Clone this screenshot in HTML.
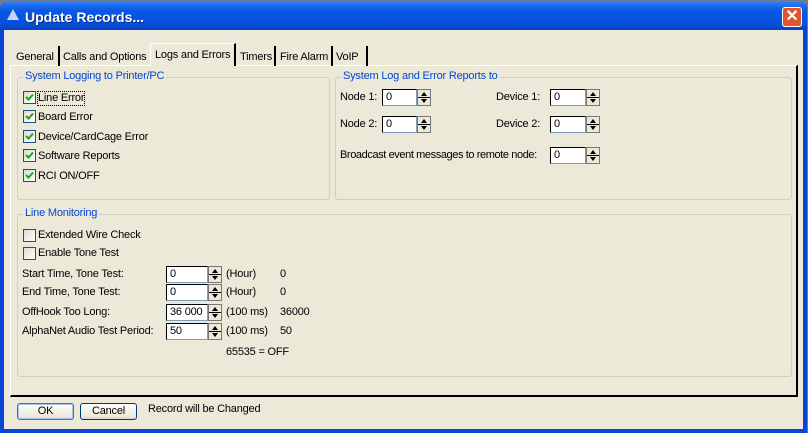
<!DOCTYPE html>
<html><head><style>
*{box-sizing:border-box;margin:0;padding:0}
body{width:808px;height:433px;overflow:hidden;background:#6d7a8f;font-family:"Liberation Sans",sans-serif;font-size:11px;letter-spacing:-0.2px;color:#000;position:relative}
.a{position:absolute}
.win{left:0;top:2px;width:807px;height:431px;background:#0a45d8;border-radius:7px 7px 0 0}
.title{left:0;top:2px;width:807px;height:28px;background:linear-gradient(#2b7cf6,#0a58e6 30%,#0550da 80%,#0a3fc0);border-radius:7px 7px 0 0}
.body{left:4px;top:30px;width:799px;height:399px;background:#ece9d8}
.t{white-space:nowrap;line-height:13px}
.grp{border:1px solid #d0d0bf;border-radius:3px}
.leg{background:#ece9d8;color:#0046d5;padding:0 2px}
.cb{width:13px;height:13px;border:1px solid #1c5180;background:linear-gradient(135deg,#dcdcd5,#fff)}
.cb svg{position:absolute;left:1px;top:1px}
.in{height:17px;border:1px solid #7f9db9;border-top-color:#000;border-left-color:#000;background:#fff;padding-left:3px;line-height:15px}
.sp{width:14px;height:17px;background:#ece9d8;border:1px solid #777;}
.sp:before{content:"";position:absolute;left:3px;top:2px;border:3px solid transparent;border-bottom:4px solid #000;border-top:0}
.sp:after{content:"";position:absolute;left:3px;bottom:2px;border:3px solid transparent;border-top:4px solid #000;border-bottom:0}
.sp i{position:absolute;left:0;top:7px;width:12px;height:1px;background:#000}
.sep{top:46px;width:2px;height:20px;background:#000}
.btn{height:17px;border:1px solid #003c74;border-radius:3px;background:linear-gradient(#fff,#ece9d8 85%,#d6d0c5);text-align:center;line-height:15px}
</style></head><body>
<div class="a win"></div>
<div class="a title"></div>
<div class="a" style="left:7px;top:9px;width:0;height:0;border-left:6px solid transparent;border-right:6px solid transparent;border-bottom:11px solid #c8d4ff"></div>
<div class="a t" style="left:25px;top:9px;color:#fff;font-weight:bold;font-size:14px;line-height:16px;letter-spacing:0;text-shadow:1px 1px #0a2a80">Update Records...</div>
<div class="a" style="left:782px;top:7px;width:20px;height:20px;border:1px solid #fff;border-radius:3px;background:#e0542e;color:#fff;text-align:center;font-size:16px;line-height:18px;font-weight:bold">✕</div>
<div class="a body"></div>
<!-- tab panel -->
<div class="a" style="left:10px;top:65px;width:788px;height:332px;border:1px solid #fff;border-right:2px solid #000;border-bottom:2px solid #000;background:#ece9d8"></div>
<div class="a t" style="left:16px;top:51px">General</div><div class="a sep" style="left:58px"></div>
<div class="a t" style="left:63px;top:51px">Calls and Options</div>
<div class="a" style="left:150px;top:43px;width:86px;height:23px;background:#ece9d8;border:1px solid #fff;border-bottom:none;border-right:2px solid #000"></div>
<div class="a t" style="left:155px;top:49px">Logs and Errors</div>
<div class="a t" style="left:240px;top:51px">Timers</div><div class="a sep" style="left:274px"></div>
<div class="a t" style="left:280px;top:51px">Fire Alarm</div><div class="a sep" style="left:331px"></div>
<div class="a t" style="left:336px;top:51px">VoIP</div><div class="a sep" style="left:366px"></div>
<!-- group 1 -->
<div class="a grp" style="left:17px;top:77px;width:313px;height:123px"></div>
<div class="a t leg" style="left:23px;top:70px">System Logging to Printer/PC</div>
<div class="a cb" style="left:23px;top:91px"><svg width="9" height="9"><path d="M1 4l2.5 2.5L8 1.5" stroke="#21a121" stroke-width="2" fill="none"/></svg></div><div class="a t" style="left:38px;top:92px;outline:1px dotted #000">Line Error</div>
<div class="a cb" style="left:23px;top:110px"><svg width="9" height="9"><path d="M1 4l2.5 2.5L8 1.5" stroke="#21a121" stroke-width="2" fill="none"/></svg></div><div class="a t" style="left:38px;top:111px">Board Error</div>
<div class="a cb" style="left:23px;top:130px"><svg width="9" height="9"><path d="M1 4l2.5 2.5L8 1.5" stroke="#21a121" stroke-width="2" fill="none"/></svg></div><div class="a t" style="left:38px;top:131px">Device/CardCage Error</div>
<div class="a cb" style="left:23px;top:149px"><svg width="9" height="9"><path d="M1 4l2.5 2.5L8 1.5" stroke="#21a121" stroke-width="2" fill="none"/></svg></div><div class="a t" style="left:38px;top:150px">Software Reports</div>
<div class="a cb" style="left:23px;top:169px"><svg width="9" height="9"><path d="M1 4l2.5 2.5L8 1.5" stroke="#21a121" stroke-width="2" fill="none"/></svg></div><div class="a t" style="left:38px;top:170px">RCI ON/OFF</div>
<!-- group 2 -->
<div class="a grp" style="left:335px;top:77px;width:457px;height:123px"></div>
<div class="a t leg" style="left:341px;top:70px">System Log and Error Reports to</div>
<div class="a t" style="left:340px;top:91px">Node 1:</div><div class="a in" style="left:382px;top:89px;width:35px">0</div><div class="a sp" style="left:417px;top:89px"><i></i></div>
<div class="a t" style="left:340px;top:118px">Node 2:</div><div class="a in" style="left:382px;top:116px;width:35px">0</div><div class="a sp" style="left:417px;top:116px"><i></i></div>
<div class="a t" style="left:496px;top:91px">Device 1:</div><div class="a in" style="left:550px;top:89px;width:36px">0</div><div class="a sp" style="left:586px;top:89px"><i></i></div>
<div class="a t" style="left:496px;top:118px">Device 2:</div><div class="a in" style="left:550px;top:116px;width:36px">0</div><div class="a sp" style="left:586px;top:116px"><i></i></div>
<div class="a t" style="left:340px;top:149px;letter-spacing:-0.4px">Broadcast event messages to remote node:</div><div class="a in" style="left:550px;top:147px;width:36px">0</div><div class="a sp" style="left:586px;top:147px"><i></i></div>
<!-- group 3 -->
<div class="a grp" style="left:17px;top:214px;width:775px;height:163px"></div>
<div class="a t leg" style="left:23px;top:207px">Line Monitoring</div>
<div class="a cb" style="left:23px;top:229px"></div><div class="a t" style="left:38px;top:229px">Extended Wire Check</div>
<div class="a cb" style="left:23px;top:247px"></div><div class="a t" style="left:38px;top:247px">Enable Tone Test</div>
<div class="a t" style="left:22px;top:268px">Start Time, Tone Test:</div><div class="a in" style="left:166px;top:266px;width:42px">0</div><div class="a sp" style="left:208px;top:266px"><i></i></div><div class="a t" style="left:226px;top:268px">(Hour)</div><div class="a t" style="left:280px;top:268px">0</div>
<div class="a t" style="left:22px;top:286px">End Time, Tone Test:</div><div class="a in" style="left:166px;top:284px;width:42px">0</div><div class="a sp" style="left:208px;top:284px"><i></i></div><div class="a t" style="left:226px;top:286px">(Hour)</div><div class="a t" style="left:280px;top:286px">0</div>
<div class="a t" style="left:22px;top:306px">OffHook Too Long:</div><div class="a in" style="left:166px;top:304px;width:42px">36 000</div><div class="a sp" style="left:208px;top:304px"><i></i></div><div class="a t" style="left:226px;top:306px">(100 ms)</div><div class="a t" style="left:280px;top:306px">36000</div>
<div class="a t" style="left:22px;top:325px">AlphaNet Audio Test Period:</div><div class="a in" style="left:166px;top:323px;width:42px">50</div><div class="a sp" style="left:208px;top:323px"><i></i></div><div class="a t" style="left:226px;top:325px">(100 ms)</div><div class="a t" style="left:280px;top:325px">50</div>
<div class="a t" style="left:226px;top:346px">65535 = OFF</div>
<!-- buttons -->
<div class="a btn" style="left:17px;top:403px;width:57px;border-color:#3c6fd0;box-shadow:inset 0 0 0 1px #a9c3f0">OK</div>
<div class="a btn" style="left:80px;top:403px;width:57px">Cancel</div>
<div class="a t" style="left:148px;top:403px">Record will be Changed</div>
</body></html>
